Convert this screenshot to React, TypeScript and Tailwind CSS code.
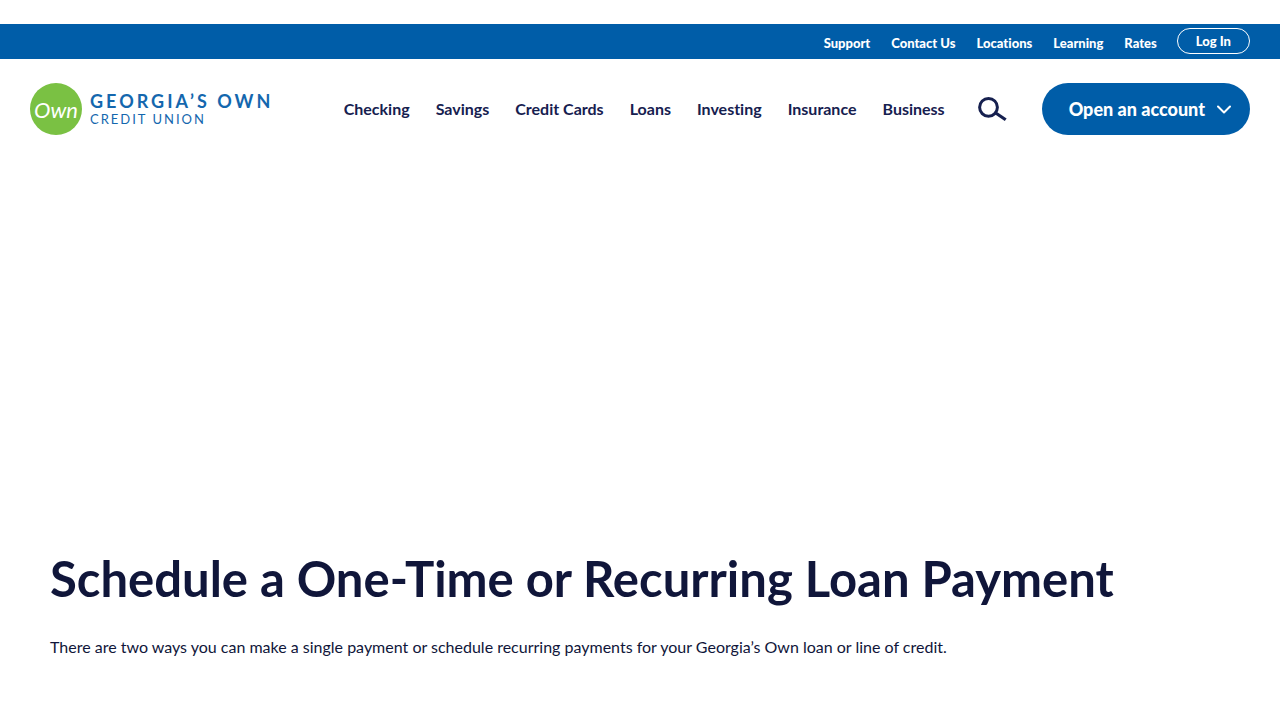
const utilityLinks = ["Support", "Contact Us", "Locations", "Learning", "Rates"];

const mainLinks = [
  "Checking",
  "Savings",
  "Credit Cards",
  "Loans",
  "Investing",
  "Insurance",
  "Business",
];

function Logo() {
  return (
    <a href="#home" aria-label="Georgia's Own Credit Union" className="flex shrink-0 items-center gap-2">
      <span className="flex size-13 items-center justify-center rounded-full bg-[#7ac143] text-[22px] font-normal text-white italic">
        Own
      </span>
      <span className="flex flex-col text-[#1467ae]">
        <span className="text-lg leading-5 font-bold tracking-[3px] whitespace-nowrap">GEORGIA’S OWN</span>
        <span className="text-[13px] leading-4 tracking-[2px] whitespace-nowrap">CREDIT UNION</span>
      </span>
    </a>
  );
}

function SearchIcon() {
  return (
    <svg width="30" height="26" viewBox="0 0 30 26" fill="none" stroke="#16204f" strokeWidth="3" aria-hidden="true">
      <circle cx="11.5" cy="11.3" r="8.9" />
      <path d="M18 16.5 28.7 23.8" strokeWidth="3.2" />
    </svg>
  );
}

function ChevronIcon() {
  return (
    <svg width="14" height="9" viewBox="0 0 14 9" fill="none" stroke="currentColor" strokeWidth="2" strokeLinecap="round" strokeLinejoin="round" aria-hidden="true">
      <path d="M1 1.5 7 7.5 13 1.5" />
    </svg>
  );
}

export default function App() {
  return (
    <div className="min-h-screen bg-white pt-6 font-['Lato',sans-serif] text-[#10163a] [font-variant-ligatures:no-common-ligatures]">
      <nav aria-label="Utility" className="flex justify-end gap-5 bg-[#005da8] px-[30px] pt-1 pb-[5px] text-[13px] leading-4 font-black text-white">
        <ul className="flex gap-[21px] pt-[7px]">
          {utilityLinks.map((label) => (
            <li key={label}>
              <a href="#utility">{label}</a>
            </li>
          ))}
        </ul>
        <button type="button" className="h-[26px] rounded-full border border-white px-[18px]">
          Log In
        </button>
      </nav>

      <header className="flex items-center justify-between px-[30px] py-6">
        <Logo />
        <div className="flex items-center">
          <nav aria-label="Main">
            <ul className="flex gap-[26px] text-base font-bold whitespace-nowrap text-[#16204f]">
              {mainLinks.map((label) => (
                <li key={label}>
                  <a href="#section">{label}</a>
                </li>
              ))}
            </ul>
          </nav>
          <button type="button" aria-label="Search" className="mr-[35px] ml-8">
            <SearchIcon />
          </button>
          <button type="button" className="flex h-13 items-center gap-3 rounded-full bg-[#005da8] pr-[19px] pl-[27px] text-lg font-black whitespace-nowrap text-white">
            Open an account
            <ChevronIcon />
          </button>
        </div>
      </header>

      <main className="px-[50px] pt-[383px] pb-12">
        <h1 className="text-[49px] leading-[72px] font-bold">Schedule a One-Time or Recurring Loan Payment</h1>
        <p className="mt-[21px] text-base">
          There are two ways you can make a single payment or schedule recurring payments for your Georgia’s Own loan or
          line of credit.
        </p>
      </main>
    </div>
  );
}
